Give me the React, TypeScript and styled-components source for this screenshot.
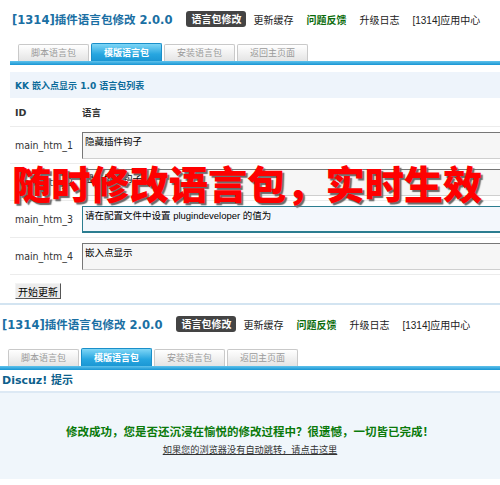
import React from 'react'
import styled, { createGlobalStyle, css } from 'styled-components'

const GlobalStyle = createGlobalStyle`
  html, body {
    margin: 0;
    width: 500px;
    height: 485px;
    overflow: hidden;
    background: #fff;
  }
  body {
    font-family: "Liberation Sans", "Noto Sans CJK SC", sans-serif;
    font-size: 10px;
    color: #333;
  }
`

const cjk = `"DejaVu Sans", "Noto Sans CJK SC", sans-serif`

const Page = styled.div`
  position: relative;
  width: 500px;
`

const Panel = styled.section<{ $indent: number; $divider?: boolean }>`
  padding-left: ${(p) => p.$indent}px;
  width: 560px;
  ${(p) =>
    p.$divider &&
    css`
      border-top: 2px solid #d3e4f1;
    `}
`

const Header = styled.div<{ $top: number }>`
  display: flex;
  align-items: center;
  height: 26px;
  margin-top: ${(p) => p.$top}px;
  padding-left: 2px;
`

const Title = styled.h1`
  margin: 0;
  font-family: ${cjk};
  font-size: 11.55px;
  font-weight: bold;
  color: #1a6fa3;
  white-space: nowrap;
`

const Badge = styled.span`
  margin-left: 14px;
  padding: 2px 5px;
  border-radius: 3px;
  background: #444;
  color: #fff;
  font-family: "Noto Sans CJK SC", sans-serif;
  font-weight: bold;
  font-size: 10px;
  line-height: 12px;
`

const NavLink = styled.a<{ $green?: boolean }>`
  margin-left: 13px;
  color: ${(p) => (p.$green ? '#0a6b0a' : '#222')};
  font-family: "Liberation Sans", "Noto Sans CJK SC", sans-serif;
  font-weight: ${(p) => (p.$green ? 'bold' : 'normal')};
  font-size: 10px;
  text-decoration: none;
  white-space: nowrap;
  &:first-of-type {
    margin-left: 7px;
  }
`

const TabStrip = styled.div<{ $top: number }>`
  display: flex;
  align-items: flex-end;
  gap: 2px;
  height: 18px;
  margin-top: ${(p) => p.$top}px;
  padding-left: 8px;
`

const Tab = styled.div<{ $active?: boolean }>`
  box-sizing: border-box;
  width: 71px;
  height: ${(p) => (p.$active ? 18 : 17)}px;
  border: 1px solid ${(p) => (p.$active ? '#1a8fc9' : '#c9c9c9')};
  border-bottom: none;
  border-radius: 2px 2px 0 0;
  background: ${(p) =>
    p.$active ? 'linear-gradient(#7fd6f6, #27a6e0 60%, #1b97d4)' : 'linear-gradient(#ffffff, #e4e4e4)'};
  color: ${(p) => (p.$active ? '#fff' : '#9a9a9a')};
  font-family: "Noto Sans CJK SC", sans-serif;
  font-weight: ${(p) => (p.$active ? 'bold' : 'normal')};
  font-size: 9px;
  line-height: ${(p) => (p.$active ? 17 : 16)}px;
  text-align: center;
`

const TabBar = styled.div`
  height: 4px;
  background: linear-gradient(#5fc2ec, #1895d3);
`

const ListHead = styled.div`
  height: 26px;
  margin-top: 7px;
  padding-left: 5px;
  display: flex;
  align-items: center;
  background: #eef4fb;
  color: #0c6b9a;
  font-family: ${cjk};
  font-size: 9px;
  font-weight: bold;
`

const Row = styled.div<{ $head?: boolean }>`
  display: grid;
  grid-template-columns: 72px 440px;
  align-items: center;
  box-sizing: border-box;
  height: ${(p) => (p.$head ? 29 : 37)}px;
  border-bottom: 1px solid #ececec;
  font-family: ${(p) => (p.$head ? cjk : `"DejaVu Sans Condensed", "Liberation Sans", sans-serif`)};
  font-size: ${(p) => (p.$head ? 9.5 : 10.5)}px;
  font-weight: ${(p) => (p.$head ? 'bold' : 'normal')};
  color: #333;
  & > span {
    padding-left: 5px;
  }
`

const Field = styled.textarea<{ $focus?: boolean }>`
  box-sizing: border-box;
  height: 27px;
  margin: 0;
  padding: 1px 2px;
  resize: none;
  overflow: hidden;
  outline: none;
  font-family: "Liberation Sans", "Noto Sans CJK SC", sans-serif;
  font-size: 9.5px;
  color: #000;
  ${(p) =>
    p.$focus
      ? css`
          border: 1px solid #2b7d90;
          border-bottom-width: 2px;
          background: #f3f7fc;
        `
      : css`
          border: 1px solid #cfcfcf;
          border-top-color: #777;
          border-left-color: #777;
          background: #f6f6f6;
        `}
`

const Submit = styled.button`
  display: block;
  margin: 8px 0 0 5px;
  height: 16px;
  padding: 0 2px;
  border: 1px solid;
  border-color: #f4f4f4 #555 #555 #f4f4f4;
  background: #ececec;
  font-family: "Noto Sans CJK SC", sans-serif;
  font-size: 10px;
  line-height: 13px;
  color: #000;
`

const PanelEnd = styled.div`
  height: 4px;
`

const NoticeTitle = styled.h2`
  margin: 0;
  height: 15px;
  padding: 1px 0 0 2px;
  font-family: ${cjk};
  font-size: 11px;
  font-weight: bold;
  color: #0d5f8c;
`

const NoticeBox = styled.div`
  margin-top: 5px;
  width: 500px;
  height: 88px;
  border-top: 2px solid #dde9f4;
  background: #f0f6fb;
  display: flex;
  flex-direction: column;
  align-items: center;
  justify-content: center;
  gap: 3px;
  padding-top: 6px;
  box-sizing: border-box;
`

const Success = styled.p`
  margin: 0;
  color: #0a7a0a;
  font-family: "Noto Sans CJK SC", sans-serif;
  font-weight: bold;
  font-size: 11.5px;
`

const Redirect = styled.a`
  color: #333;
  font-family: "Noto Sans CJK SC", sans-serif;
  font-size: 9.2px;
  text-decoration: underline;
`

// big red caption laid over the language table
const Slogan = styled.div`
  position: absolute;
  left: 12px;
  top: 149px;
  color: #ff0000;
  font-family: "Noto Sans CJK SC", sans-serif;
  font-size: 39.2px;
  font-weight: 900;
  line-height: 54px;
  white-space: nowrap;
  text-shadow: 2px 2px 1px #6b6b6b;
`

const tabs = ['脚本语言包', '模版语言包', '安装语言包', '返回主页面']

const langRows = [
  { id: 'main_htm_1', text: '隐藏插件钩子' },
  { id: 'main_htm_2', text: '显示插件钩子' },
  { id: 'main_htm_3', text: '请在配置文件中设置 plugindeveloper 的值为', focus: true },
  { id: 'main_htm_4', text: '嵌入点显示' },
]

const TopBar: React.FC<{ top: number }> = ({ top }) => (
  <Header $top={top}>
    <Title>[1314]插件语言包修改 2.0.0</Title>
    <Badge>语言包修改</Badge>
    <NavLink href="#">更新缓存</NavLink>
    <NavLink href="#" $green>
      问题反馈
    </NavLink>
    <NavLink href="#">升级日志</NavLink>
    <NavLink href="#">[1314]应用中心</NavLink>
  </Header>
)

const Tabs: React.FC<{ top: number }> = ({ top }) => (
  <>
    <TabStrip $top={top}>
      {tabs.map((t, i) => (
        <Tab key={t} $active={i === 1}>
          {t}
        </Tab>
      ))}
    </TabStrip>
    <TabBar />
  </>
)

const App: React.FC = () => (
  <>
    <GlobalStyle />
    <Page>
      <Panel $indent={10}>
        <TopBar top={6} />
        <Tabs top={11} />
        <ListHead>KK 嵌入点显示 1.0 语言包列表</ListHead>
        <Row $head>
          <span>ID</span>
          <div>语言</div>
        </Row>
        {langRows.map((r) => (
          <Row key={r.id}>
            <span>{r.id}</span>
            <Field readOnly $focus={r.focus} defaultValue={r.text} />
          </Row>
        ))}
        <Submit type="button">开始更新</Submit>
        <PanelEnd />
      </Panel>
      <Panel $indent={0} $divider>
        <TopBar top={6} />
        <Tabs top={11} />
        <NoticeTitle>Discuz! 提示</NoticeTitle>
        <NoticeBox>
          <Success>修改成功，您是否还沉浸在愉悦的修改过程中？很遗憾，一切皆已完成！</Success>
          <Redirect href="#">如果您的浏览器没有自动跳转，请点击这里</Redirect>
        </NoticeBox>
      </Panel>
      <Slogan>随时修改语言包，实时生效</Slogan>
    </Page>
  </>
)

export default App
